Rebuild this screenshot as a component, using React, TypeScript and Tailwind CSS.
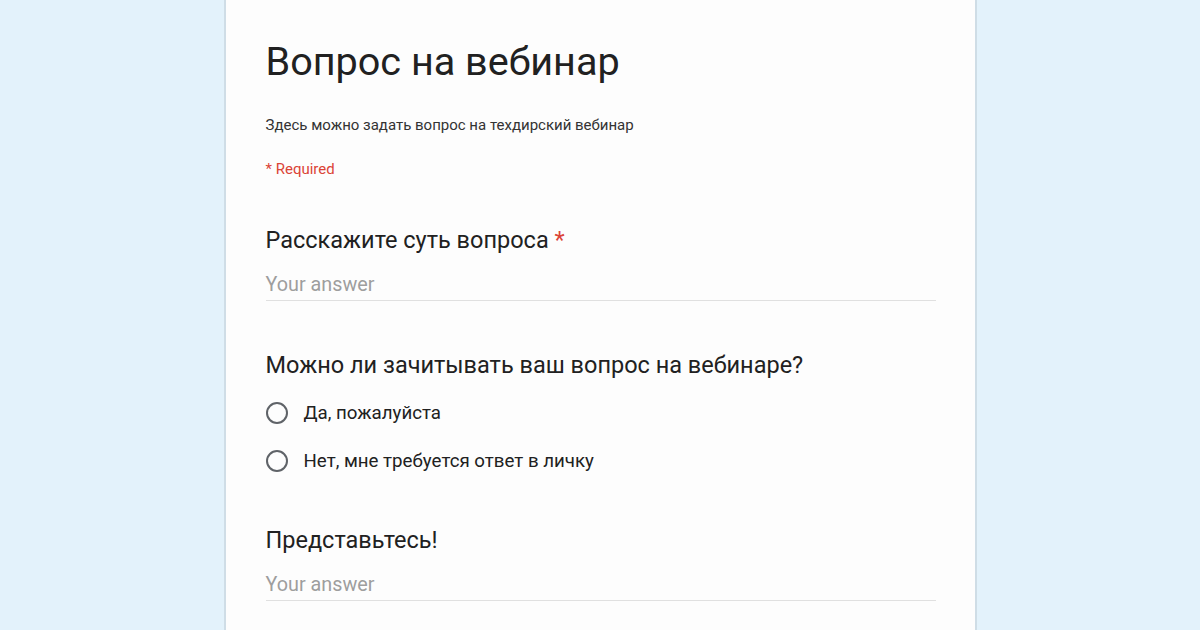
export default function App() {
  return (
    <div
      className="w-[1200px] h-[630px] overflow-hidden bg-[#e3f2fb] flex justify-center"
      style={{ fontFamily: "Roboto, 'Noto Sans', sans-serif" }}
    >
      <div className="w-[753px] h-full bg-[#fdfdfd] border-x-2 border-[#cfdde6] pl-[40px] pr-[40px]">
        {/* Header */}
        <h1 className="mt-[38px] text-[39.6px] leading-[48px] text-[#212121]">Вопрос на вебинар</h1>
        <p className="mt-[30px] text-[15px] leading-[18px] text-[#333]">
          Здесь можно задать вопрос на техдирский вебинар
        </p>
        <p className="mt-[26px] text-[15px] leading-[18px] text-[#db4437]">* Required</p>

        {/* Question 1 */}
        <div className="mt-[48px]">
          <div className="text-[23.5px] leading-[28px] text-[#212121]">
            Расскажите суть вопроса <span className="text-[#db4437]">*</span>
          </div>
          <div className="mt-[19px] w-[670px] border-b border-[#e0e0e0] pb-[3px] text-[19.8px] leading-[24px] text-[#9e9e9e]">
            Your answer
          </div>
        </div>

        {/* Question 2 */}
        <div className="mt-[50px]">
          <div className="text-[23.5px] leading-[28px] text-[#212121]">
            Можно ли зачитывать ваш вопрос на вебинаре?
          </div>
          <div className="mt-[23px] flex flex-col gap-[26px]">
            {["Да, пожалуйста", "Нет, мне требуется ответ в личку"].map((label) => (
              <div key={label} className="flex items-center gap-[16px]">
                <div className="w-[22px] h-[22px] rounded-full border-2 border-[#5f6368]" />
                <span className="text-[18.7px] leading-[22px] text-[#212121]">{label}</span>
              </div>
            ))}
          </div>
        </div>

        {/* Question 3 */}
        <div className="mt-[54px]">
          <div className="text-[23.5px] leading-[28px] text-[#212121]">Представьтесь!</div>
          <div className="mt-[19px] w-[670px] border-b border-[#e0e0e0] pb-[3px] text-[19.8px] leading-[24px] text-[#9e9e9e]">
            Your answer
          </div>
        </div>
      </div>
    </div>
  );
}
